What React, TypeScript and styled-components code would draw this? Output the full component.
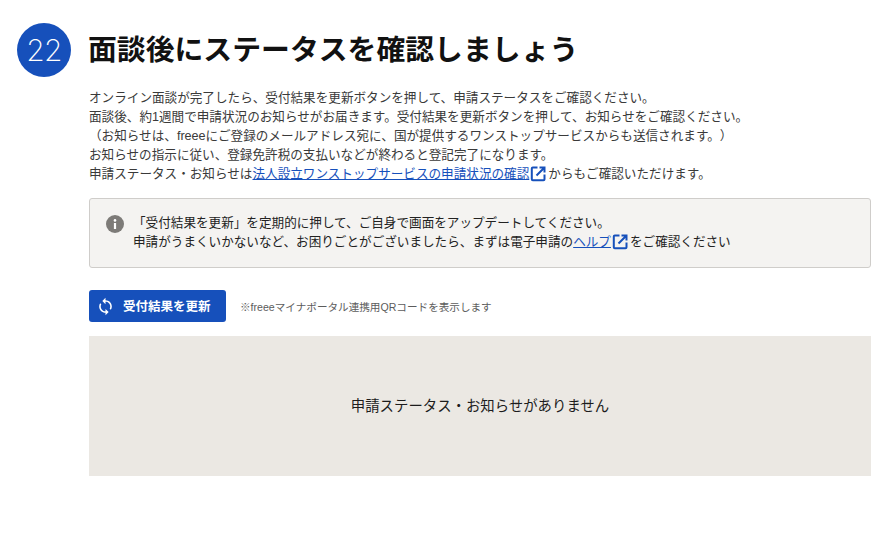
import React from "react";
import styled, { createGlobalStyle } from "styled-components";
import { MdSync } from "react-icons/md";

const GlobalStyle = createGlobalStyle`
  html, body {
    margin: 0;
    padding: 0;
    background: #fff;
  }
  body {
    font-family: "Liberation Sans", "Noto Sans CJK JP", sans-serif;
    color: #323232;
    text-spacing-trim: space-all;
  }
`;

const Page = styled.div`
  width: 888px;
  height: 553px;
  box-sizing: border-box;
  padding: 23px 17px 0;
  overflow: hidden;
`;

const Header = styled.header`
  display: flex;
  align-items: center;
  gap: 17px;
  height: 54px;
`;

const StepBadge = styled.div`
  width: 54px;
  height: 54px;
  border-radius: 50%;
  background: #1650bb;
  color: #fff;
  display: flex;
  align-items: center;
  justify-content: center;
  font-family: "Inter", sans-serif;
  font-weight: 250;
  font-size: 30px;
  letter-spacing: -0.8px;
`;

const Title = styled.h1`
  margin: 0;
  font-size: 28.85px;
  line-height: 50px;
  font-weight: 700;
  color: #111;
`;

const Body = styled.div`
  margin-left: 72px;
`;

const Lead = styled.p`
  margin: 12px 0 0;
  font-size: 12.6px;
  line-height: 19px;
  color: #3a3a3a;
`;

const TextLink = styled.a`
  color: #1650bb;
  text-decoration: underline;
`;

const ExternalIcon = styled.svg`
  width: 17px;
  height: 17px;
  vertical-align: -4px;
  margin: 0 1px;
`;

const External = () => (
  <ExternalIcon viewBox="0 0 17 17" fill="none" stroke="#1650bb" strokeWidth="2">
    <path d="M7.5 2.500H2.800a1 1 0 0 0-1 1v10.700a1 1 0 0 0 1 1h10.700a1 1 0 0 0 1-1V9.500" />
    <path d="M9.500 2.500h5v5M14.500 2.500 6.500 10.500" />
  </ExternalIcon>
);

const Notice = styled.div`
  margin-top: 14px;
  height: 70px;
  box-sizing: border-box;
  border: 1px solid #cfcdca;
  border-radius: 3px;
  background: #f4f3f1;
  display: flex;
  padding: 15px 16px;
  gap: 9px;
  font-size: 12.6px;
  line-height: 19px;
  color: #222;
`;

const InfoIcon = styled.svg`
  width: 18px;
  height: 18px;
  margin-top: 1px;
  flex: none;
`;

const NoticeText = styled.div`
  margin-top: 0;
`;

const Actions = styled.div`
  margin-top: 22px;
  display: flex;
  align-items: center;
  gap: 14px;
`;

const RefreshButton = styled.button`
  width: 137px;
  height: 32px;
  border: none;
  border-radius: 3px;
  background: #1650bb;
  color: #fff;
  font-family: inherit;
  font-size: 12.5px;
  font-weight: 700;
  display: flex;
  align-items: center;
  gap: 8px;
  padding: 0 0 2px 7px;
  cursor: pointer;
`;

const SyncIcon = styled(MdSync)`
  width: 19px;
  height: 19px;
  margin-top: 2px;
  flex: none;
`;

const ButtonNote = styled.span`
  font-size: 10.6px;
  color: #5c5c5c;
`;

const EmptyPanel = styled.div`
  margin-top: 14px;
  height: 140px;
  box-sizing: border-box;
  padding-bottom: 4px;
  background: #ebe8e3;
  display: flex;
  align-items: center;
  justify-content: center;
  font-size: 14.4px;
  color: #1c1c1c;
`;

export default function App() {
  return (
    <Page>
      <GlobalStyle />
      <Header>
        <StepBadge>22</StepBadge>
        <Title>面談後にステータスを確認しましょう</Title>
      </Header>
      <Body>
        <Lead>
          オンライン面談が完了したら、受付結果を更新ボタンを押して、申請ステータスをご確認ください。
          <br />
          面談後、約1週間で申請状況のお知らせがお届きます。受付結果を更新ボタンを押して、お知らせをご確認ください。
          <br />
          （お知らせは、freeeにご登録のメールアドレス宛に、国が提供するワンストップサービスからも送信されます。）
          <br />
          お知らせの指示に従い、登録免許税の支払いなどが終わると登記完了になります。
          <br />
          申請ステータス・お知らせは
          <TextLink href="#">法人設立ワンストップサービスの申請状況の確認</TextLink>
          <External />
          からもご確認いただけます。
        </Lead>
        <Notice>
          <InfoIcon viewBox="0 0 18 18">
            <circle cx="9" cy="9" r="9" fill="#7d7b78" />
            <rect x="7.9" y="8" width="2.2" height="6" fill="#fff" />
            <circle cx="9" cy="5.4" r="1.3" fill="#fff" />
          </InfoIcon>
          <NoticeText>
            「受付結果を更新」を定期的に押して、ご自身で画面をアップデートしてください。
            <br />
            申請がうまくいかないなど、お困りごとがございましたら、まずは電子申請の
            <TextLink href="#">ヘルプ</TextLink>
            <External />
            をご確認ください
          </NoticeText>
        </Notice>
        <Actions>
          <RefreshButton>
            <SyncIcon />
            受付結果を更新
          </RefreshButton>
          <ButtonNote>※freeeマイナポータル連携用QRコードを表示します</ButtonNote>
        </Actions>
        <EmptyPanel>申請ステータス・お知らせがありません</EmptyPanel>
      </Body>
    </Page>
  );
}
